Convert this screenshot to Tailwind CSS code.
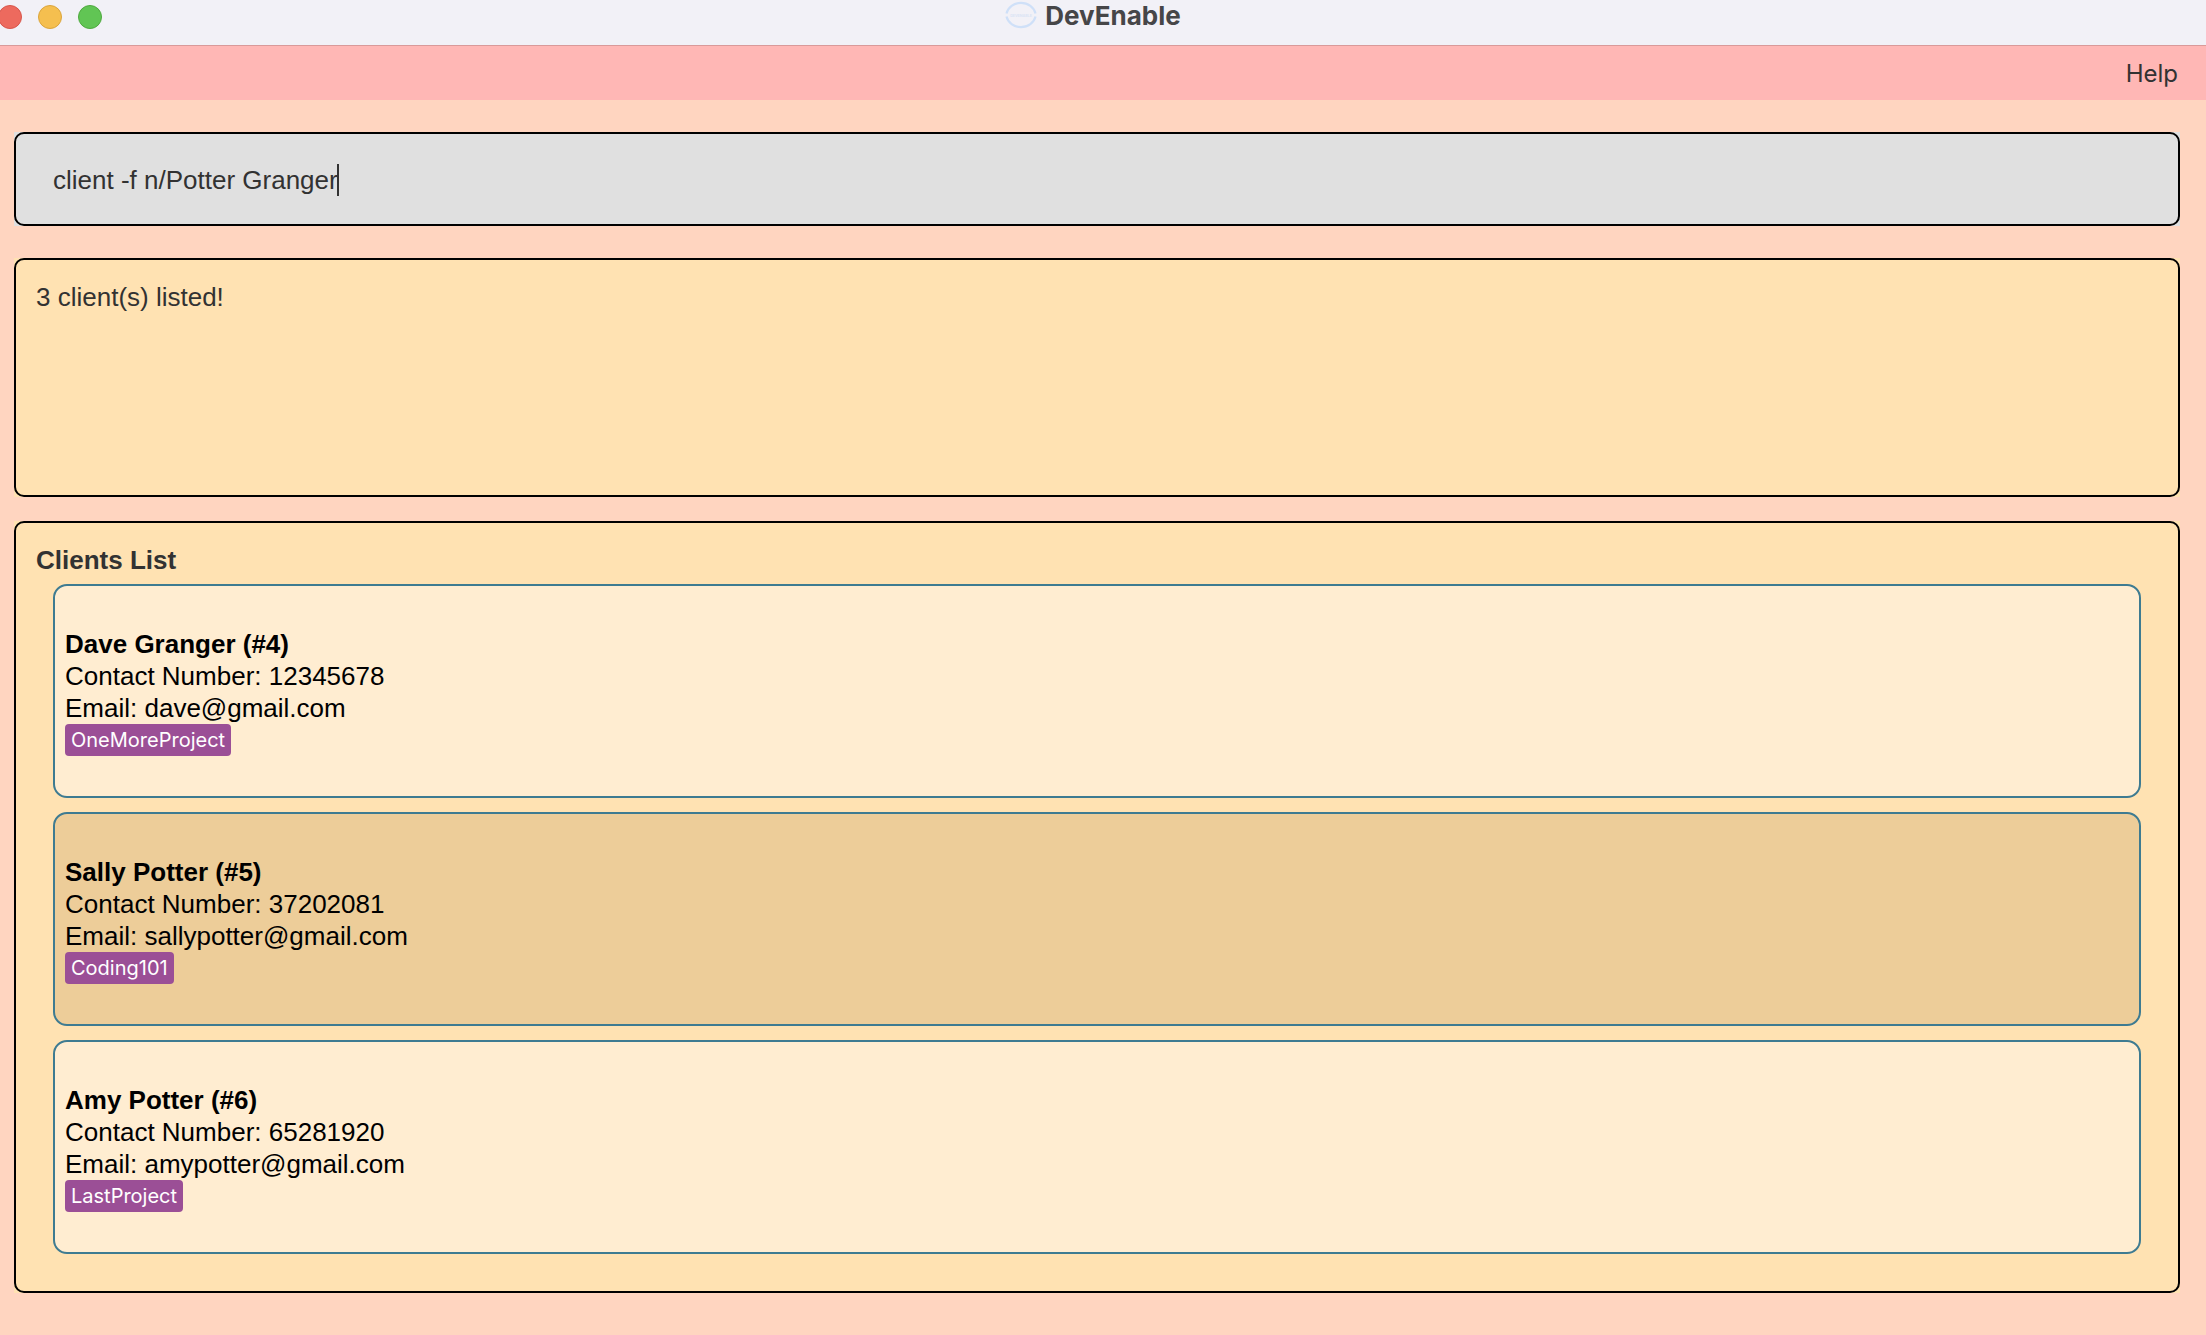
<!DOCTYPE html>
<html lang="en">
<head>
<meta charset="utf-8">
<title>DevEnable</title>
<script src="https://cdn.jsdelivr.net/npm/@tailwindcss/browser@4"></script>
</head>
<body class="min-h-screen bg-[#ffd5c0] font-['Liberation_Sans',Arial,sans-serif] text-[26px] leading-8 text-[#323232]">
  <header class="flex h-[46px] items-start overflow-hidden border-b border-[#d99a9a] bg-[#f2f1f7] pr-[18px]">
    <div class="-ml-0.5 flex flex-1 gap-4 pt-[5px]">
      <button aria-label="Close" class="size-6 rounded-full border border-[#d8564b] bg-[#ed6a5e]"></button>
      <button aria-label="Minimize" class="size-6 rounded-full border border-[#dba53c] bg-[#f5bf4f]"></button>
      <button aria-label="Zoom" class="size-6 rounded-full border border-[#4fa93f] bg-[#61c554]"></button>
    </div>
    <div class="flex items-center gap-2">
      <svg class="h-8 w-8" viewBox="0 0 32 32" fill="none" aria-hidden="true">
        <path d="M1.500 13.500A14.800 13.300 0 0 1 30.500 13.500M1.500 16.500A14.800 13.300 0 0 0 30.500 16.500" stroke="#cfe0f8" stroke-width="2.200"/>
        <text x="16" y="16.500" text-anchor="middle" font-size="3.600" font-weight="700" fill="#dbe4f5" font-family="Inter, sans-serif">DEVENABLE</text>
      </svg>
      <h1 class="font-['Inter',sans-serif] text-[26px] font-bold text-[#464648]">DevEnable</h1>
    </div>
    <div class="flex-1"></div>
  </header>

  <nav class="flex h-[54px] items-center justify-end bg-[#ffb7b5] pt-0.5 pr-7">
    <button class="font-['Inter',sans-serif] text-[24px]">Help</button>
  </nav>

  <main class="flex flex-col pt-8 pr-[26px] pb-10 pl-3.5">
    <div class="bg-[#e0e0e0]">
      <div class="flex h-[94px] items-center rounded-[10px] border-2 border-black pt-0.5 pl-[37px]">
        <input aria-label="Command" value="client -f n/Potter Granger" class="field-sizing-content bg-transparent p-0 outline-none">
        <span class="-ml-px h-8 w-0.5 bg-[#323232]"></span>
      </div>
    </div>

    <div class="mt-8 bg-[#ffe2b2]">
      <textarea readonly aria-label="Result" class="block h-[239px] w-full resize-none rounded-[10px] border-2 border-black px-5 py-[21px] outline-none">3 client(s) listed!</textarea>
    </div>

    <div class="mt-6 bg-[#ffe2b2]">
      <section class="rounded-[10px] border-2 border-black pt-[21px] pb-[37px]">
        <h2 class="px-5 font-bold">Clients List</h2>
        <ul class="mx-[37px] mt-2 flex flex-col gap-3.5 text-black">
          <li class="flex flex-col items-start rounded-[14px] border-2 border-[#3e7b91] bg-[#ffedd1] px-2.5 pt-[42px] pb-10">
            <h3 class="font-bold">Dave Granger (#4)</h3>
            <p>Contact Number: 12345678</p>
            <p>Email: dave@gmail.com</p>
            <span class="rounded bg-[#9b4f96] px-1.5 font-['Inter',sans-serif] text-[20px] text-white">OneMoreProject</span>
          </li>
          <li class="flex flex-col items-start rounded-[14px] border-2 border-[#3e7b91] bg-[#edcd99] px-2.5 pt-[42px] pb-10">
            <h3 class="font-bold">Sally Potter (#5)</h3>
            <p>Contact Number: 37202081</p>
            <p>Email: sallypotter@gmail.com</p>
            <span class="rounded bg-[#9b4f96] px-1.5 font-['Inter',sans-serif] text-[20px] text-white">Coding101</span>
          </li>
          <li class="flex flex-col items-start rounded-[14px] border-2 border-[#3e7b91] bg-[#ffedd1] px-2.5 pt-[42px] pb-10">
            <h3 class="font-bold">Amy Potter (#6)</h3>
            <p>Contact Number: 65281920</p>
            <p>Email: amypotter@gmail.com</p>
            <span class="rounded bg-[#9b4f96] px-1.5 font-['Inter',sans-serif] text-[20px] text-white">LastProject</span>
          </li>
        </ul>
      </section>
    </div>
  </main>
</body>
</html>
